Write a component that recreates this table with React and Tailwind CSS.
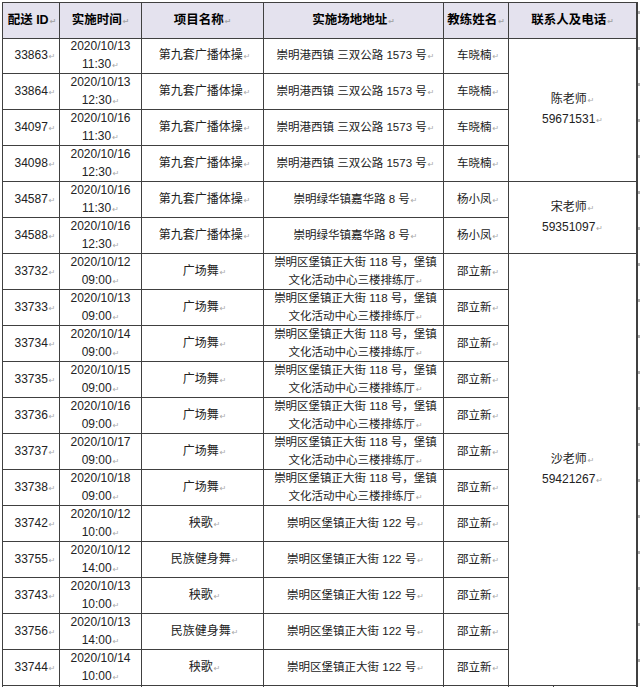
import React from 'react'

const rows = [
  ['33863', '2020/10/13', '11:30', '第九套广播体操', ['崇明港西镇 三双公路 1573 号'], '车晓楠'],
  ['33864', '2020/10/13', '12:30', '第九套广播体操', ['崇明港西镇 三双公路 1573 号'], '车晓楠'],
  ['34097', '2020/10/16', '11:30', '第九套广播体操', ['崇明港西镇 三双公路 1573 号'], '车晓楠'],
  ['34098', '2020/10/16', '12:30', '第九套广播体操', ['崇明港西镇 三双公路 1573 号'], '车晓楠'],
  ['34587', '2020/10/16', '11:30', '第九套广播体操', ['崇明绿华镇嘉华路 8 号'], '杨小凤'],
  ['34588', '2020/10/16', '12:30', '第九套广播体操', ['崇明绿华镇嘉华路 8 号'], '杨小凤'],
  ['33732', '2020/10/12', '09:00', '广场舞', ['崇明区堡镇正大街 118 号，堡镇', '文化活动中心三楼排练厅'], '邵立新'],
  ['33733', '2020/10/13', '09:00', '广场舞', ['崇明区堡镇正大街 118 号，堡镇', '文化活动中心三楼排练厅'], '邵立新'],
  ['33734', '2020/10/14', '09:00', '广场舞', ['崇明区堡镇正大街 118 号，堡镇', '文化活动中心三楼排练厅'], '邵立新'],
  ['33735', '2020/10/15', '09:00', '广场舞', ['崇明区堡镇正大街 118 号，堡镇', '文化活动中心三楼排练厅'], '邵立新'],
  ['33736', '2020/10/16', '09:00', '广场舞', ['崇明区堡镇正大街 118 号，堡镇', '文化活动中心三楼排练厅'], '邵立新'],
  ['33737', '2020/10/17', '09:00', '广场舞', ['崇明区堡镇正大街 118 号，堡镇', '文化活动中心三楼排练厅'], '邵立新'],
  ['33738', '2020/10/18', '09:00', '广场舞', ['崇明区堡镇正大街 118 号，堡镇', '文化活动中心三楼排练厅'], '邵立新'],
  ['33742', '2020/10/12', '10:00', '秧歌', ['崇明区堡镇正大街 122 号'], '邵立新'],
  ['33755', '2020/10/12', '14:00', '民族健身舞', ['崇明区堡镇正大街 122 号'], '邵立新'],
  ['33743', '2020/10/13', '10:00', '秧歌', ['崇明区堡镇正大街 122 号'], '邵立新'],
  ['33756', '2020/10/13', '14:00', '民族健身舞', ['崇明区堡镇正大街 122 号'], '邵立新'],
  ['33744', '2020/10/14', '10:00', '秧歌', ['崇明区堡镇正大街 122 号'], '邵立新'],
]

// contact cells keyed by the row they start on
const contacts = {
  0: { span: 'row-span-4', name: '陈老师', tel: '59671531' },
  4: { span: 'row-span-2', name: '宋老师', tel: '59351097' },
  6: { span: 'row-span-12', name: '沙老师', tel: '59421267' },
}

const Mark = () => (
  <span className="ml-[1px] font-['DejaVu_Sans'] text-[8px] text-[#a8a8a8]">↵</span>
)

const cell = 'flex flex-col items-center justify-center text-center border-r border-b border-[#404040] leading-[18px] whitespace-nowrap'
const head = 'h-[37px] border-t bg-[#e4e2ee] font-bold text-[12.5px] text-black'

const Edge = () => (
  <div className="relative">
    <div className="absolute left-0 top-[9px] h-[3px] w-[2px] bg-[#b0b0b0]" />
  </div>
)

const App = () => {
  return (
    <div className="w-[640px] h-[687px] overflow-hidden bg-white pl-[2px] pt-[2px] font-['Liberation_Sans','Noto_Sans_CJK_SC',sans-serif] text-[12px] text-[#222]">
      <div className="grid grid-cols-[58px_82px_122px_180px_65px_129px_2px] auto-rows-[36px]">
        {/* header */}
        <div className={`${cell} ${head} border-l pl-[2px]`}>
          <span>配送 ID<Mark /></span>
        </div>
        {['实施时间', '项目名称', '实施场地地址', '教练姓名'].map((h) => (
          <div key={h} className={`${cell} ${head}`}>
            <span>{h}<Mark /></span>
          </div>
        ))}
        <div className={`${cell} ${head} border-r-2`}>
          <span>联系人及电话<Mark /></span>
        </div>
        <Edge />

        {rows.map((r, i) => (
          <React.Fragment key={r[0]}>
            <div className={`${cell} border-l pl-[8px]`}>
              <span>{r[0]}<Mark /></span>
            </div>
            <div className={cell}>
              <span>{r[1]}</span>
              <span>{r[2]}<Mark /></span>
            </div>
            <div className={`${cell} pl-[4px]`}>
              <span>{r[3]}<Mark /></span>
            </div>
            <div className={`${cell} text-[11.5px] pl-[4px]`}>
              {r[4].map((line, k) => (
                <span key={k}>
                  {line}
                  {k === r[4].length - 1 && <Mark />}
                </span>
              ))}
            </div>
            <div className={`${cell} text-[11.5px] pl-[4px]`}>
              <span>{r[5]}<Mark /></span>
            </div>
            {contacts[i] && (
              <div className={`${cell} ${contacts[i].span} border-r-2`}>
                <span>{contacts[i].name}<Mark /></span>
                <span>{contacts[i].tel}<Mark /></span>
              </div>
            )}
            <Edge />
          </React.Fragment>
        ))}

        {/* start of the next table row, cut off by the page edge */}
        <div className="h-[10px] border-l border-r border-[#404040]" />
        <div className="h-[10px] border-r border-[#404040]" />
        <div className="h-[10px] border-r border-[#404040]" />
        <div className="h-[10px] border-r border-[#404040]" />
        <div className="h-[10px] border-r border-[#404040]" />
        <div className="h-[10px] border-r-2 border-[#404040]">
          <div className="ml-[44px] h-full border-l border-[#404040]" />
        </div>
        <div />
      </div>
    </div>
  )
}

export default App
